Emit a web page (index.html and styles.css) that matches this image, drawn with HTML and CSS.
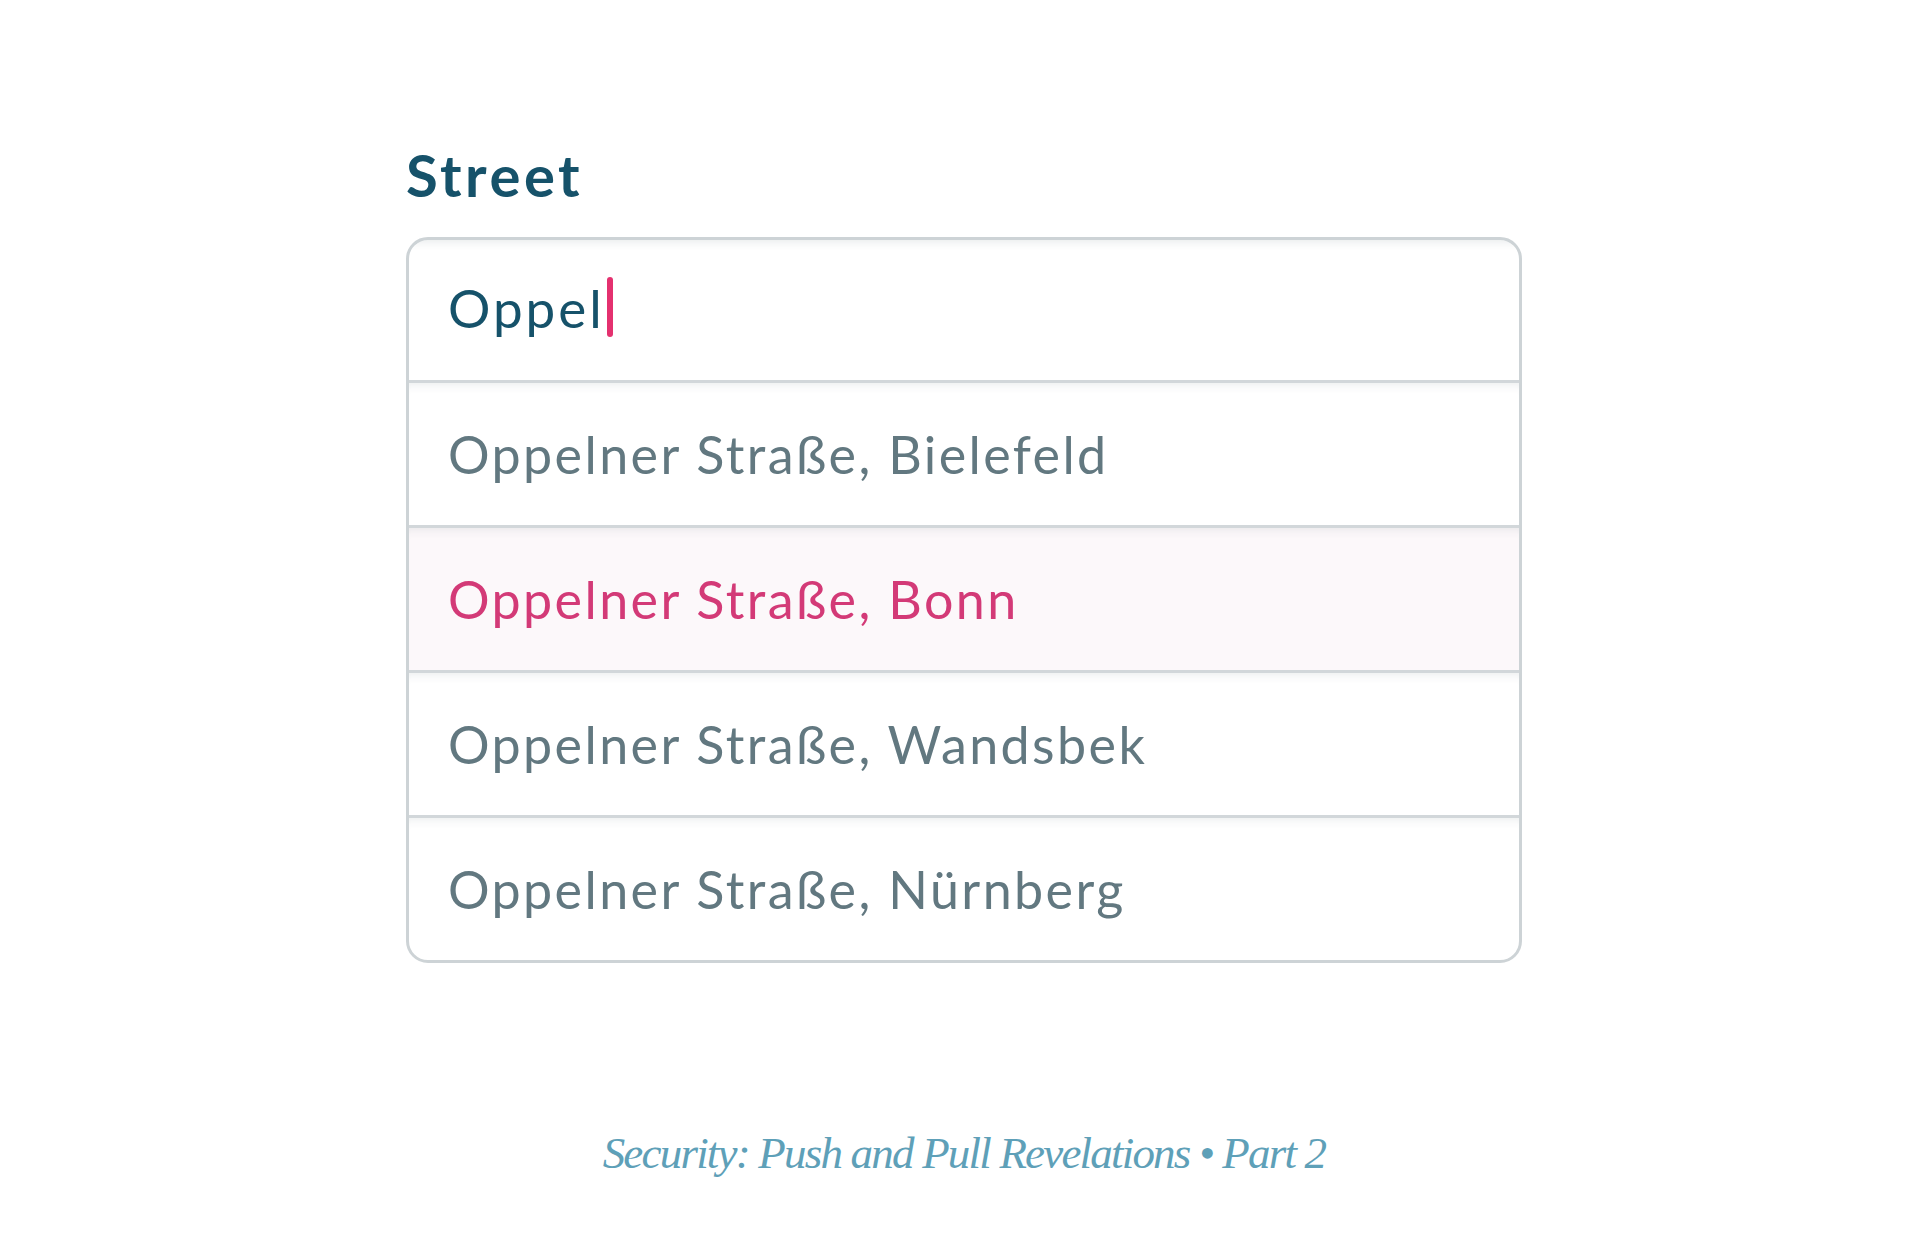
FILE: index.html
```html
<!DOCTYPE html>
<html lang="de">
<head>
<meta charset="utf-8">
<title>Street</title>
<link rel="stylesheet" href="styles.css">
</head>
<body>
<main class="page">
  <section class="field">
    <label class="label" for="street">Street</label>
    <div class="combo">
      <div class="input" id="street"><span class="typed">Oppel</span><span class="caret"></span></div>
      <ul class="options">
        <li class="option">Oppelner Straße, Bielefeld</li>
        <li class="option option-active">Oppelner Straße, Bonn</li>
        <li class="option">Oppelner Straße, Wandsbek</li>
        <li class="option">Oppelner Straße, Nürnberg</li>
      </ul>
    </div>
  </section>
  <p class="caption">Security: Push and Pull Revelations • Part 2</p>
</main>
</body>
</html>
```

FILE: styles.css
```css
html, body {
  margin: 0;
  padding: 0;
  background: #ffffff;
}

.page {
  width: 1928px;
  min-height: 1246px;
  display: flex;
  flex-direction: column;
  align-items: center;
  padding-top: 140px;
  box-sizing: border-box;
  font-family: Lato, "Open Sans", sans-serif;
}

.field {
  width: 1116px;
  display: flex;
  flex-direction: column;
}

.label {
  font-size: 58px;
  line-height: 1.2;
  height: 70px;
  font-weight: 700;
  color: #16526a;
  letter-spacing: 3.5px;
  margin-bottom: 27px;
}

.combo {
  border: 3px solid #cdd3d6;
  border-radius: 22px;
  overflow: hidden;
  background: #fff;
}

.input {
  height: 140px;
  box-sizing: border-box;
  padding-bottom: 6px;
  display: flex;
  align-items: center;
  padding-left: 39px;
  font-size: 53px;
  letter-spacing: 3px;
  color: #16526a;
  box-shadow: inset 0 10px 10px -8px rgba(60, 80, 90, 0.12);
}

.caret {
  display: inline-block;
  width: 6px;
  height: 60px;
  border-radius: 3px;
  background: #e4316f;
  margin-left: 2px;
}

.options {
  list-style: none;
  margin: 0;
  padding: 0;
}

.option {
  height: 142px;
  border-top: 3px solid #d2d7da;
  display: flex;
  align-items: center;
  padding-left: 39px;
  font-size: 52px;
  letter-spacing: 2.4px;
  color: #627880;
  box-shadow: inset 0 10px 10px -8px rgba(60, 80, 90, 0.10);
}

.option-active {
  background: #fcf8fa;
  color: #d33a77;
}

.caption {
  margin: 164px 0 0;
  font-family: "Liberation Serif", serif;
  font-style: italic;
  font-size: 45px;
  letter-spacing: -1.8px;
  color: #5ea0b8;
  text-align: center;
}
```
